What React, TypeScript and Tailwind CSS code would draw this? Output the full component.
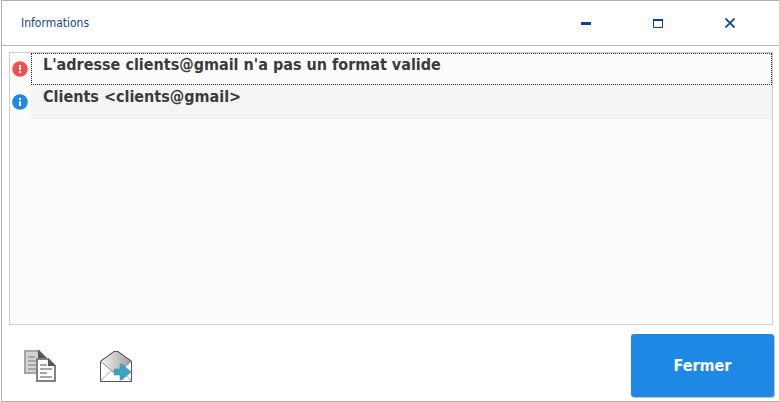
import { useState } from 'react'

type Message = {
  kind: 'error' | 'info'
  text: string
}

const messages: Message[] = [
  { kind: 'error', text: "L'adresse clients@gmail n'a pas un format valide" },
  { kind: 'info', text: 'Clients <clients@gmail>' },
]

function StatusIcon({ kind }: { kind: Message['kind'] }) {
  return (
    <svg viewBox="0 0 16 16" className="w-4 h-4 shrink-0" aria-hidden="true">
      <circle cx="8" cy="8" r="7.8" fill={kind === 'error' ? '#ef5350' : '#1e88e5'} />
      {kind === 'error' ? (
        <path d="M7 4h2v5H7zM7 10h2v2H7z" fill="#fff" />
      ) : (
        <path d="M7 4h2v2H7zM7 7h2v5H7z" fill="#fff" />
      )}
    </svg>
  )
}

function CopyIcon() {
  return (
    <svg viewBox="0 0 32 32" className="w-8 h-8" aria-hidden="true">
      <path d="M1 1h13l8 8v14H1z" fill="#d3d3d3" stroke="#a6a6a6" strokeWidth="2" />
      <path d="M14 0h1l8 8v1h-9z" fill="#575757" />
      <path d="M4 7h7M4 11h8M4 15h8M4 19h8" stroke="#a6a6a6" strokeWidth="2" />
      <path d="M13 9h11l7 7v15H13z" fill="#fff" stroke="#828282" strokeWidth="2" />
      <path d="M24 8l8 8h-8z" fill="#575757" />
      <path d="M16 15h7M16 19h12M16 23h7M16 27h12" stroke="#a6a6a6" strokeWidth="2" />
    </svg>
  )
}

function SendMailIcon() {
  return (
    <svg viewBox="0 0 32 32" className="w-8 h-8" aria-hidden="true">
      <defs>
        <linearGradient id="flap" x1="0" y1="0" x2="1" y2="0">
          <stop offset="0" stopColor="#f4f4f4" />
          <stop offset="1" stopColor="#9c9c9c" />
        </linearGradient>
      </defs>
      <path d="M.5 11v20.5h31V11" fill="#fff" />
      <path d="M1 30l11-10M31 30l-11-10" fill="none" stroke="#aaa" />
      <path d="M.5 11L14 1.5h4L31.5 11 19 22h-6z" fill="url(#flap)" stroke="#8a8a8a" />
      <path d="M.5 11.5L14 1.5h4l13.5 10v20H.5z" fill="none" stroke="#555" />
      <path d="M14 19h6v-5h2l9 8-9 8h-2v-5h-6z" fill="#43a1bf" stroke="#3c8ca8" strokeWidth=".5" />
    </svg>
  )
}

function TitleBar({ onClose }: { onClose: () => void }) {
  const button = 'w-[72px] h-full flex items-center justify-center'

  return (
    <header className="h-[45px] flex items-center justify-between border-b border-[#b9b9b9] pl-[19px] pr-[13px]">
      <h1 className="text-xs text-[#1a4684]">Informations</h1>
      <div className="flex h-full">
        <button type="button" aria-label="Réduire" className={button}>
          <svg viewBox="0 0 10 10" className="w-[10px] h-[10px]">
            <path d="M0 5.5h10" stroke="#0d4385" strokeWidth="3" />
          </svg>
        </button>
        <button type="button" aria-label="Agrandir" className={button}>
          <svg viewBox="0 0 10 10" className="w-[10px] h-[10px]">
            <path d="M.5 1.5h9v8h-9z" fill="none" stroke="#0d4385" />
            <path d="M0 2h10" stroke="#0d4385" strokeWidth="2" />
          </svg>
        </button>
        <button type="button" aria-label="Fermer la fenêtre" className={button} onClick={onClose}>
          <svg viewBox="0 0 10 10" className="w-[10px] h-[10px]">
            <path d="M.5.5l9 9M9.5.5l-9 9" stroke="#0d4385" strokeWidth="1.7" />
          </svg>
        </button>
      </div>
    </header>
  )
}

export default function App() {
  const [open, setOpen] = useState(true)
  const [selected, setSelected] = useState(0)

  if (!open) return null

  return (
    <div className="min-h-screen bg-white pl-px font-['DejaVu_Sans_Condensed','DejaVu_Sans',sans-serif] [font-stretch:condensed]">
      <div className="min-h-screen flex flex-col border-y border-l border-[#b0b0b4]">
        <TitleBar onClose={() => setOpen(false)} />

        <main className="flex-1 flex flex-col pt-1.5 pl-[7px] pr-1.5">
          <ul className="flex-1 border border-[#cdcdcd] bg-[#fcfcfc]">
            {messages.map((message, i) => (
              <li key={message.text} className="flex items-center" onClick={() => setSelected(i)}>
                <div className="w-[21px] shrink-0 pl-0.5">
                  <StatusIcon kind={message.kind} />
                </div>
                <div
                  className={`flex-1 px-[11px] text-base leading-[22px] font-bold text-[#3b3b3b] border ${
                    i === selected
                      ? 'h-8 border-dotted border-[#222]'
                      : 'h-[34px] border-transparent border-b-[#ececec] bg-[#f4f4f4]'
                  }`}
                >
                  {message.text}
                </div>
              </li>
            ))}
          </ul>
        </main>

        <footer className="flex items-center justify-between pt-[9px] pb-1 pl-[22px] pr-[5px]">
          <div className="flex gap-11">
            <button type="button" aria-label="Copier">
              <CopyIcon />
            </button>
            <button type="button" aria-label="Envoyer par e-mail">
              <SendMailIcon />
            </button>
          </div>
          <button
            type="button"
            className="w-[143px] h-[63px] rounded-[3px] bg-[#1e88e5] text-base font-bold text-white shadow-[1px_1px_0_#c0c4c8]"
            onClick={() => setOpen(false)}
          >
            Fermer
          </button>
        </footer>
      </div>
    </div>
  )
}
